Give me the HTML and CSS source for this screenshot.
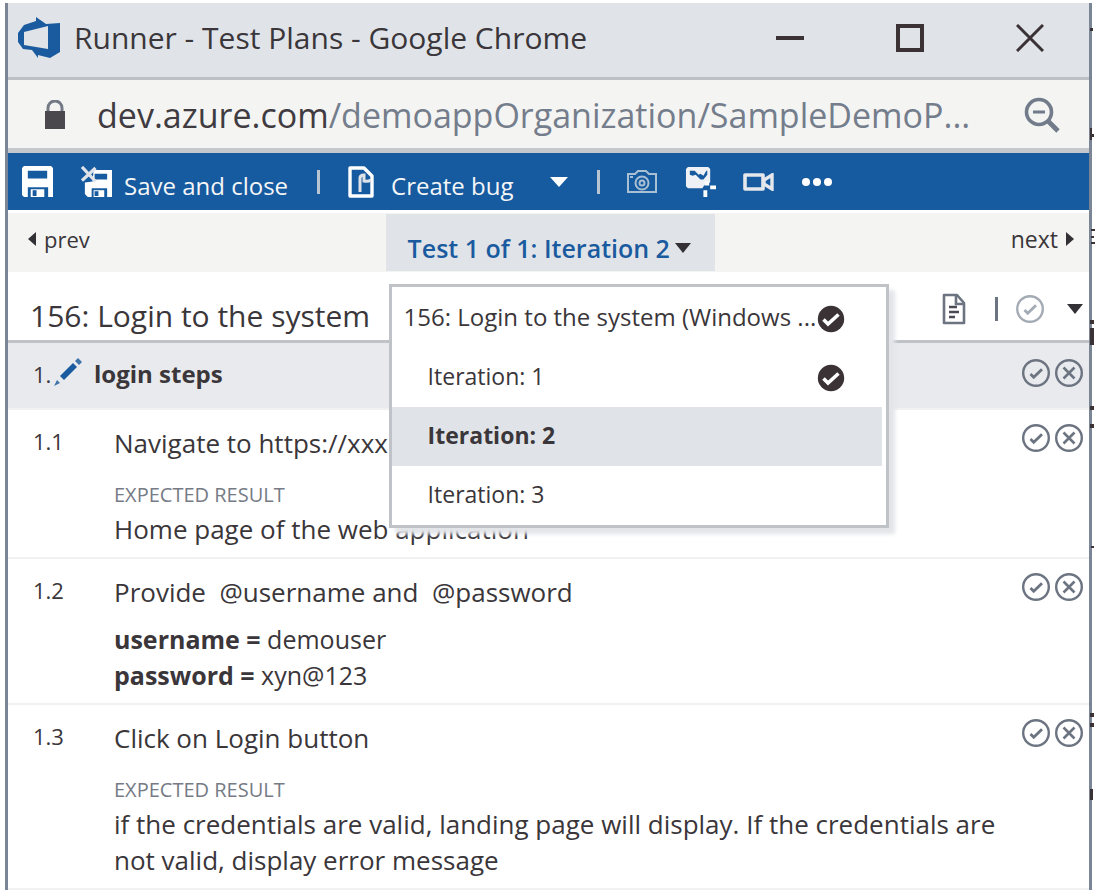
FILE: index.html
```html
<!DOCTYPE html>
<html lang="en">
<head>
<meta charset="utf-8">
<title>Runner - Test Plans</title>
<link rel="stylesheet" href="styles.css">
</head>
<body>
<svg class="defs" aria-hidden="true">
  <symbol id="pass" viewBox="0 0 30 30"><circle cx="15" cy="15" r="12.8" fill="none" stroke="currentColor" stroke-width="2.4"/><path d="M9.5 16l3.2 3.2L21 11.2" fill="none" stroke="currentColor" stroke-width="2.8"/></symbol>
  <symbol id="fail" viewBox="0 0 30 30"><circle cx="15" cy="15" r="12.8" fill="none" stroke="currentColor" stroke-width="2.4"/><path d="M9.5 9.5l11 11M20.5 9.5l-11 11" fill="none" stroke="currentColor" stroke-width="2.6"/></symbol>
  <symbol id="done" viewBox="0 0 28 28"><circle cx="14" cy="14" r="13.2" fill="#3a3235"/><path d="M6.5 14.5l4.5 4.5L21.5 9.5" fill="none" stroke="#fff" stroke-width="3.6"/></symbol>
</svg>
<div class="window">
  <header class="titlebar">
    <svg class="logo" viewBox="0 0 42 42" aria-hidden="true"><path fill="#1a5ba0" fill-rule="evenodd" d="M0 16L6 8 18 4V0l10 7 14-1v29l-10 6-12-3v3l-6-8-9-1-5-7zM6 15v13l24 4V9z"/></svg>
    <h1 class="window-title">Runner - Test Plans - Google Chrome</h1>
    <button class="win-btn" aria-label="Minimize"><svg viewBox="0 0 28 28"><path d="M0 14h28" stroke="#3a3235" stroke-width="4"/></svg></button>
    <button class="win-btn" aria-label="Maximize"><svg viewBox="0 0 28 28"><path d="M2 2h24v24H2z" fill="none" stroke="#3a3235" stroke-width="4"/></svg></button>
    <button class="win-btn" aria-label="Close"><svg viewBox="0 0 28 28"><path d="M1 1l26 26M27 1L1 27" stroke="#3a3235" stroke-width="3"/></svg></button>
  </header>
  <div class="addressbar">
    <svg class="lock" viewBox="0 0 22 30" aria-hidden="true"><path d="M4 12V8a7 7 0 0 1 14 0v4" fill="none" stroke="#737a86" stroke-width="3"/><path d="M1 11h20v18H1z" fill="#4a474d"/></svg>
    <p class="url"><span class="host">dev.azure.com</span>/demoappOrganization/SampleDemoP...</p>
    <button class="icon-btn zoom" aria-label="Zoom"><svg viewBox="0 0 36 36" fill="none" stroke="#717b8a"><circle cx="15" cy="15" r="12.5" stroke-width="3.6"/><path d="M9 15h12" stroke-width="3"/><path d="M24 24l10 10" stroke-width="4.8"/></svg></button>
  </div>
  <div class="toolbar">
    <button class="tool" aria-label="Save"><svg class="tool-icon" viewBox="0 0 32 32"><path fill="#fff" fill-rule="evenodd" d="M2 0h28l2 2v30h-5V22H6v10H2l-2-2V2zM6 5v8h20V5z"/><path fill="#fff" d="M9 24h14v8H9z"/><path fill="#165a9f" d="M11 25h4v6h-4z"/></svg></button>
    <button class="tool save-close"><svg class="tool-icon" viewBox="0 0 32 32"><path fill="#fff" fill-rule="evenodd" d="M13 4h19v28h-5V23H11v9H7l-3-3V17l8-1zM14 8v6h13V8z"/><path fill="#fff" d="M13 25h11v7H13z"/><path fill="#165a9f" d="M14 26h4v5h-4z"/><path d="M1 1l14 15M15 2L1 15" stroke="#dfe3e8" stroke-width="3.4"/></svg><span>Save and close</span></button>
    <span class="divider"></span>
    <button class="tool create"><svg class="doc-icon" viewBox="0 0 26 32"><path d="M2 2h14l8 8v20H2z" fill="none" stroke="#fff" stroke-width="3.4" stroke-linejoin="round"/><path d="M12 26V12q0-3 4-3v6q4 1 7-1" fill="none" stroke="#dfe3e8" stroke-width="3"/></svg><span>Create bug</span></button>
    <button class="tool more-create" aria-label="More create options"><svg class="caret" viewBox="0 0 18 10"><path d="M0 0h18l-9 10z" fill="#fff"/></svg></button>
    <span class="divider"></span>
    <button class="tool camera" aria-label="Capture screenshot"><svg class="cam-icon" viewBox="0 0 32 26" fill="none" stroke="#a9bfd4" stroke-width="2"><path d="M2 5h7l3-3h8l3 3h7v18H2z"/><circle cx="16" cy="14" r="6.5"/><circle cx="16" cy="14" r="2.5"/><path d="M4 8h3"/></svg></button>
    <button class="tool image" aria-label="Capture user actions"><svg class="tool-icon" viewBox="0 0 32 32"><path d="M3 1h21l2 2v14l-5 1-3 5H3l-2-2V3z" fill="#eef1f5"/><path d="M5 5h5l4 4 2-1 3 2 3-5h1v4l-4 5h-3l-5-5-3 1-3-1z" fill="#165a9f"/><path d="M20 18h5M26 22h6M21 25v7" stroke="#fff" stroke-width="4"/></svg></button>
    <button class="tool video" aria-label="Record screen"><svg class="video-icon" viewBox="0 0 32 18"><path d="M2 2h18v14H2z" fill="none" stroke="#e4e8ed" stroke-width="3.6" stroke-linejoin="round"/><path d="M21 7l8-5v14l-8-5z" fill="none" stroke="#e4e8ed" stroke-width="3.4"/></svg></button>
    <button class="tool" aria-label="More actions"><svg class="dots" viewBox="0 0 30 8" fill="#fff"><circle cx="4" cy="4" r="4"/><circle cx="15" cy="4" r="4"/><circle cx="26" cy="4" r="4"/></svg></button>
  </div>
  <nav class="pager">
    <a class="page-link" href="#prev"><svg class="arrow" viewBox="0 0 8 14"><path d="M8 0v14L0 7z" fill="#333036"/></svg>prev</a>
    <div class="picker">
      <button class="picker-btn" aria-expanded="true"><span>Test 1 of 1: Iteration 2</span><svg class="caret small" viewBox="0 0 16 10"><path d="M0 0h16l-8 10z" fill="#333036"/></svg></button>
      <ul class="menu">
        <li><button class="item head"><span>156: Login to the system (Windows ...</span><svg class="done"><use href="#done"/></svg></button></li>
        <li><button class="item"><span>Iteration: 1</span><svg class="done"><use href="#done"/></svg></button></li>
        <li><button class="item selected"><span>Iteration: 2</span></button></li>
        <li><button class="item"><span>Iteration: 3</span></button></li>
      </ul>
    </div>
    <a class="page-link next" href="#next">next<svg class="arrow" viewBox="0 0 8 14"><path d="M0 0v14l8-7z" fill="#333036"/></svg></a>
  </nav>
  <section class="case-head">
    <h2 class="case-title">156: Login to the system</h2>
    <button class="icon-btn note" aria-label="Add comment"><svg viewBox="0 0 24 32" fill="none" stroke="#6d7481"><path d="M2 2h13l7 8v20H2z" stroke-width="2.6" stroke-linejoin="round"/><path d="M14 2v9h8" stroke-width="2.6"/><path d="M7 14h8M7 19h10M7 24h6" stroke="#4b4b55" stroke-width="2.6"/></svg></button>
    <span class="divider dark"></span>
    <button class="icon-btn mark" aria-label="Mark outcome"><svg><use href="#pass"/></svg></button>
    <button class="icon-btn outcome" aria-label="Outcome options"><svg class="caret small" viewBox="0 0 16 10"><path d="M0 0h16l-8 10z" fill="#333036"/></svg></button>
  </section>
  <main class="steps">
    <section class="step group">
      <span class="num">1.<svg class="pencil" viewBox="0 0 28 28" aria-hidden="true"><path d="M6 18L19 5l4 4L10 22z" fill="#1a5ba0"/><path d="M21 3l3-3 4 4-3 3zM0 28l3-6 3 3z" fill="#3f74ab"/></svg></span>
      <h3 class="group-title">login steps</h3>
      <div class="marks"><button class="icon-btn mark" aria-label="Pass"><svg><use href="#pass"/></svg></button><button class="icon-btn mark" aria-label="Fail"><svg><use href="#fail"/></svg></button></div>
    </section>
    <section class="step">
      <span class="num">1.1</span>
      <div class="body"><p class="action">Navigate to https://xxx</p><h4 class="label">EXPECTED RESULT</h4><p class="text">Home page of the web application</p></div>
      <div class="marks"><button class="icon-btn mark" aria-label="Pass"><svg><use href="#pass"/></svg></button><button class="icon-btn mark" aria-label="Fail"><svg><use href="#fail"/></svg></button></div>
    </section>
    <section class="step">
      <span class="num">1.2</span>
      <div class="body"><p class="action">Provide&nbsp; @username and&nbsp; @password</p><div class="params"><p><b>username =</b> demouser</p><p><b>password =</b> xyn@123</p></div></div>
      <div class="marks"><button class="icon-btn mark" aria-label="Pass"><svg><use href="#pass"/></svg></button><button class="icon-btn mark" aria-label="Fail"><svg><use href="#fail"/></svg></button></div>
    </section>
    <section class="step">
      <span class="num">1.3</span>
      <div class="body"><p class="action">Click on Login button</p><h4 class="label">EXPECTED RESULT</h4><p class="text">if the credentials are valid, landing page will display. If the credentials are not valid, display error message</p></div>
      <div class="marks"><button class="icon-btn mark" aria-label="Pass"><svg><use href="#pass"/></svg></button><button class="icon-btn mark" aria-label="Fail"><svg><use href="#fail"/></svg></button></div>
    </section>
  </main>
  <svg class="specks" viewBox="0 0 6 886" fill="#3a3235" aria-hidden="true"><path d="M1 25h3v3H1zM1 125h2v12H1zM2 131h3v3H2zM2 226h4v2H2zM2 233h3v2H2zM2 239h4v2H2zM1 317h4v4H1zM1 325h4v17H1zM1 403h4v4H1zM1 421h4v4H1zM2 543h3v2H2zM1 710h4v4H1zM1 720h4v4H1zM1 786h3v11H1z"/></svg>
</div>
</body>
</html>
```
FILE: styles.css
```css
* { box-sizing: border-box; }
body { margin: 0; padding: 3px 8px 6px 5px; background: #fff; color: #3a363a; font: 24px/36px "Open Sans", "Noto Sans", sans-serif; }
h1, h2, h3, h4, p, ul { margin: 0; padding: 0; font-weight: 400; }
button { border: 0; padding: 0; background: none; color: inherit; font: inherit; cursor: pointer; }
svg { display: block; flex: none; }
.defs { position: absolute; width: 0; height: 0; }
.window { position: relative; border: solid #7a8595; border-width: 0 3px; }
.specks { position: absolute; top: 0; right: -6px; width: 6px; height: 886px; }

.titlebar { display: flex; align-items: center; height: 77px; padding: 0 45px 4px 10px; background: #e0e4e8; border-bottom: 3px solid #bdc0c4; }
.logo { width: 42px; height: 42px; }
.window-title { flex: 1; margin-left: 14px; font-size: 30px; white-space: nowrap; }
.win-btn { width: 28px; height: 28px; margin-left: 92px; }
.win-btn svg { width: 28px; height: 28px; }

.addressbar { display: flex; align-items: center; height: 73px; padding: 2px 29px 0 36px; background: #f4f4f3; border-bottom: 5px solid #c5c8cc; }
.lock { width: 22px; height: 30px; }
.url { flex: 1; margin-left: 31px; color: #747d8b; font-size: 34px; white-space: nowrap; }
.host { color: #3f3b41; }
.zoom svg { width: 36px; height: 36px; }

.toolbar { display: flex; align-items: center; height: 57px; padding-left: 14px; background: #165a9f; color: #f4f6f8; }
.tool { display: flex; align-items: center; white-space: nowrap; }
.tool-icon { width: 31px; height: 31px; }
.tool span { margin-top: 8px; }
.save-close { gap: 12px; margin-left: 28px; }
.divider { width: 3px; height: 24px; margin-left: 29px; background: #b9c4d2; }
.create { gap: 17px; margin-left: 28px; }
.doc-icon { width: 26px; height: 32px; }
.caret { width: 18px; height: 10px; }
.small { width: 16px; height: 10px; }
.more-create { margin-left: 36px; }
.camera { margin-left: 26px; }
.cam-icon { width: 32px; height: 26px; }
.image { margin-left: 27px; }
.video { margin: 0 27px; }
.video-icon { width: 32px; height: 18px; }
.dots { width: 30px; height: 8px; }

.pager { display: flex; justify-content: space-between; align-items: flex-start; height: 62px; padding: 1px 15px 0 20px; background: #f4f4f3; border-top: 3px solid #fff; }
.page-link { display: flex; align-items: center; gap: 8px; margin-top: 7px; color: inherit; font-size: 22px; text-decoration: none; }
.next { font-size: 23px; }
.arrow { width: 8px; height: 14px; }
.picker { position: relative; }
.picker-btn { display: flex; align-items: center; gap: 5px; height: 57px; padding: 10px 24px 0 22px; background: #e0e4e8; color: #1a5ba0; font-size: 25px; font-weight: 600; white-space: nowrap; }
.menu { position: absolute; z-index: 1; top: 70px; left: 3px; width: 500px; padding: 2px 4px 0 0; border: 3px solid #bfc3c8; background: #fff; box-shadow: 6px 6px 4px #e3e5e9; list-style: none; }
.item { display: flex; align-items: center; justify-content: space-between; width: 100%; height: 59px; padding: 0 37px 0 36px; font-size: 23px; text-align: left; white-space: nowrap; }
.item span { padding-bottom: 3px; }
.head { padding-left: 12px; font-size: 24px; }
.selected { background: #e0e4e8; font-weight: 700; }
.done { width: 28px; height: 28px; }

.case-head { display: flex; align-items: center; height: 71px; padding: 6px 6px 0 22px; border-bottom: 3px solid #bfc3c8; }
.case-title { flex: 1; padding-top: 14px; font-size: 30px; }
.note svg { width: 24px; height: 32px; }
.dark { background: #6d7481; }
.mark svg { width: 30px; height: 30px; }
.mark { color: #6d7481; }
.case-head .mark { margin-left: 17px; color: #a4abb5; }
.outcome { margin-left: 22px; }

.step { display: flex; align-items: flex-start; padding: 13px 5px 9px 25px; border-bottom: 2px solid #f1f1f2; }
.group { height: 67px; padding-top: 15px; background: #e8eaed; }
.num { display: flex; width: 81px; padding-top: 2px; font-size: 22px; line-height: 32px; }
.group .num { gap: 3px; width: 61px; padding-top: 0; }
.group-title { flex: 1; font-size: 24px; font-weight: 700; line-height: 32px; }
.pencil { width: 28px; height: 28px; }
.body { flex: 1; padding: 2px 12px 1px 0; font-size: 26px; }
.marks { display: flex; gap: 3px; }
.label { margin-top: 18px; color: #767b85; font-size: 20px; line-height: 32px; }
.params { margin-top: 11px; font-size: 25px; }
```
